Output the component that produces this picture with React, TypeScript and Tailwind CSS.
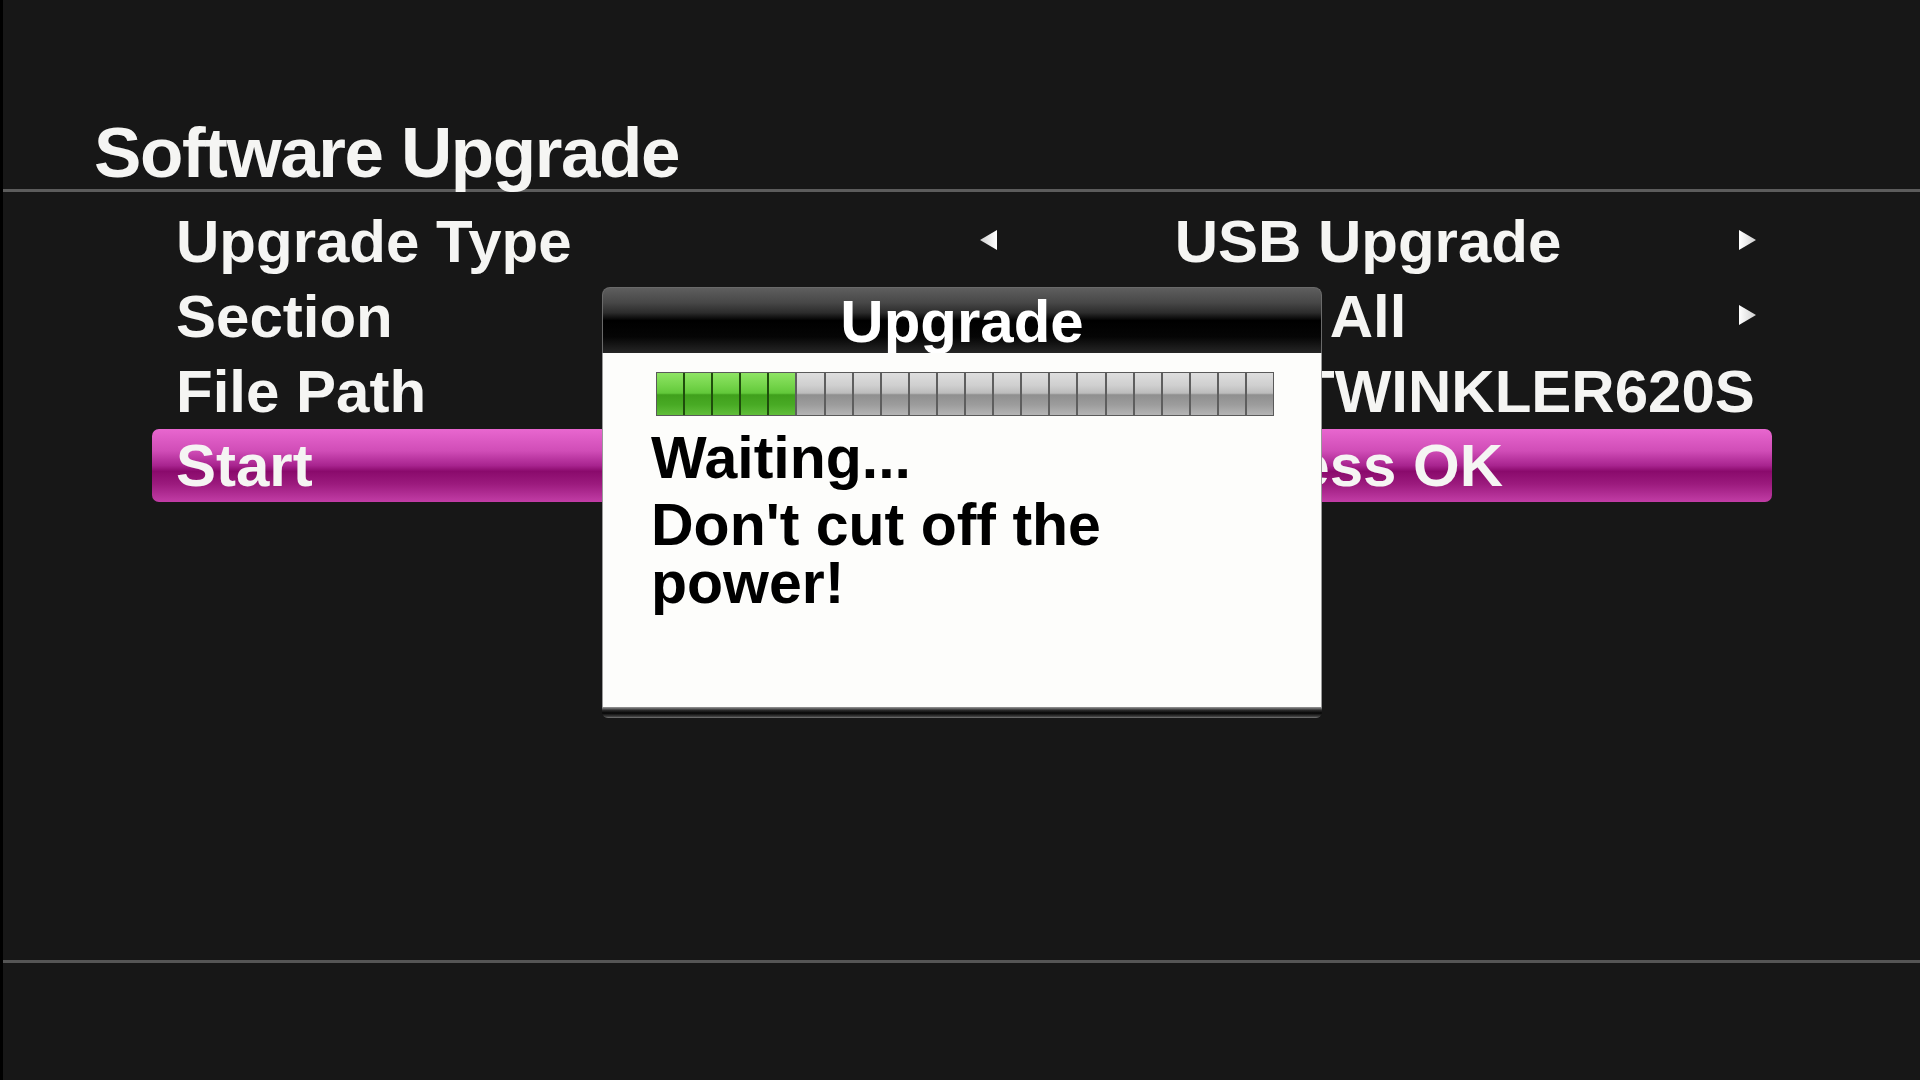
import React from "react";

function ArrowLeft() {
  return (
    <svg width="20" height="22" viewBox="0 0 20 22">
      <defs>
        <linearGradient id="al" x1="0" y1="0" x2="1" y2="0">
          <stop offset="0" stopColor="#cfcfcf" />
          <stop offset="1" stopColor="#ffffff" />
        </linearGradient>
      </defs>
      <polygon points="19,1 19,21 2,11" fill="url(#al)" />
    </svg>
  );
}

function ArrowRight() {
  return (
    <svg width="20" height="22" viewBox="0 0 20 22">
      <defs>
        <linearGradient id="ar" x1="0" y1="0" x2="1" y2="0">
          <stop offset="0" stopColor="#ffffff" />
          <stop offset="1" stopColor="#cfcfcf" />
        </linearGradient>
      </defs>
      <polygon points="1,1 1,21 18,11" fill="url(#ar)" />
    </svg>
  );
}

type Row = {
  label: string;
  value: string;
  left?: boolean;
  right?: boolean;
  active?: boolean;
};

const rows: Row[] = [
  { label: "Upgrade Type", value: "USB Upgrade", left: true, right: true },
  { label: "Section", value: "All", left: true, right: true },
  { label: "File Path", value: "/mnt/usb1/TWINKLER620S" },
  { label: "Start", value: "Press OK", active: true },
];

export default function App() {
  const segments = Array.from({ length: 22 }, (_, i) => i < 5);
  return (
    <div className="relative w-[1920px] h-[1080px] overflow-hidden bg-[#171717] border-l-[3px] border-black font-['Liberation_Sans',Arial,sans-serif] font-bold text-[#f5f5f3]">
      {/* Title */}
      <div className="h-[189px] flex items-end pl-[91px]">
        <h1 className="text-[71px] leading-none tracking-[-1.4px] pb-[1px]">Software Upgrade</h1>
      </div>
      <div className="h-[3px] bg-[#5c5c5c]" />

      {/* Menu */}
      <div className="mt-[12px] ml-[149px] w-[1620px] flex flex-col">
        {rows.map((r) => (
          <div
            key={r.label}
            className={
              r.active
                ? "h-[73px] flex items-center rounded-[7px] bg-[linear-gradient(to_bottom,#e867cf_0%,#d04db7_30%,#a8248f_50%,#8a0a6c_58%,#9b1a7d_75%,#c23da6_100%)]"
                : "h-[75px] flex items-center"
            }
          >
            <div className="w-[826px] pl-[24px] text-[60px] leading-none whitespace-nowrap">
              {r.label}
            </div>
            <div className="w-[20px] h-[22px] flex items-center justify-center -mt-[3px]">
              {r.left ? <ArrowLeft /> : null}
            </div>
            <div className="w-[740px] text-center text-[60px] leading-none whitespace-nowrap">
              {r.value}
            </div>
            <div className="w-[20px] h-[22px] flex items-center justify-center -mt-[3px]">
              {r.right ? <ArrowRight /> : null}
            </div>
          </div>
        ))}
      </div>

      {/* Bottom divider */}
      <div className="absolute left-0 right-0 top-[960px] h-[3px] bg-[#555555]" />

      {/* Dialog */}
      <div className="absolute left-[599px] top-[287px] w-[720px] h-[431px] flex flex-col">
        <div className="h-[66px] rounded-t-[8px] border border-[#6a6a6a] border-b-0 flex items-center justify-center bg-[linear-gradient(to_bottom,#5e5e5e_0%,#484848_22%,#2c2c2c_38%,#000000_50%,#050505_75%,#262626_100%)]">
          <span className="text-[60px] leading-none text-white pt-[2px]">Upgrade</span>
        </div>
        <div className="flex-1 bg-[#fdfdfb] pl-[48px] pt-[19px] border-x border-[#9a9a9a]">
          <div className="ml-[5px] w-[618px] h-[44px] flex border border-[#5a5a5a] bg-[#555]">
            {segments.map((on, i) => (
              <div
                key={i}
                className={
                  (i > 0 ? "border-l-2 " : "") +
                  (on
                    ? "flex-1 border-[#1f4d0c] bg-[linear-gradient(to_bottom,#8ee464_0%,#74d44a_30%,#62c83a_48%,#40a01c_52%,#48aa24_75%,#60be3a_100%)]"
                    : "flex-1 border-[#5e5e5e] bg-[linear-gradient(to_bottom,#dedede_0%,#cfcfcf_30%,#bcbcbc_48%,#8f8f8f_52%,#9c9c9c_75%,#b5b5b5_100%)]")
                }
              />
            ))}
          </div>
          <div className="mt-[13px] text-black text-[59px] leading-[58px]">
            <p className="mb-[9px]">Waiting...</p>
            <p className="w-[560px]">Don't cut off the power!</p>
          </div>
        </div>
        <div className="h-[11px] rounded-b-[6px] bg-[linear-gradient(to_bottom,#9a9a9a_0%,#2a2a2a_30%,#050505_55%,#3a3a3a_85%,#7a7a7a_100%)]" />
      </div>
    </div>
  );
}
